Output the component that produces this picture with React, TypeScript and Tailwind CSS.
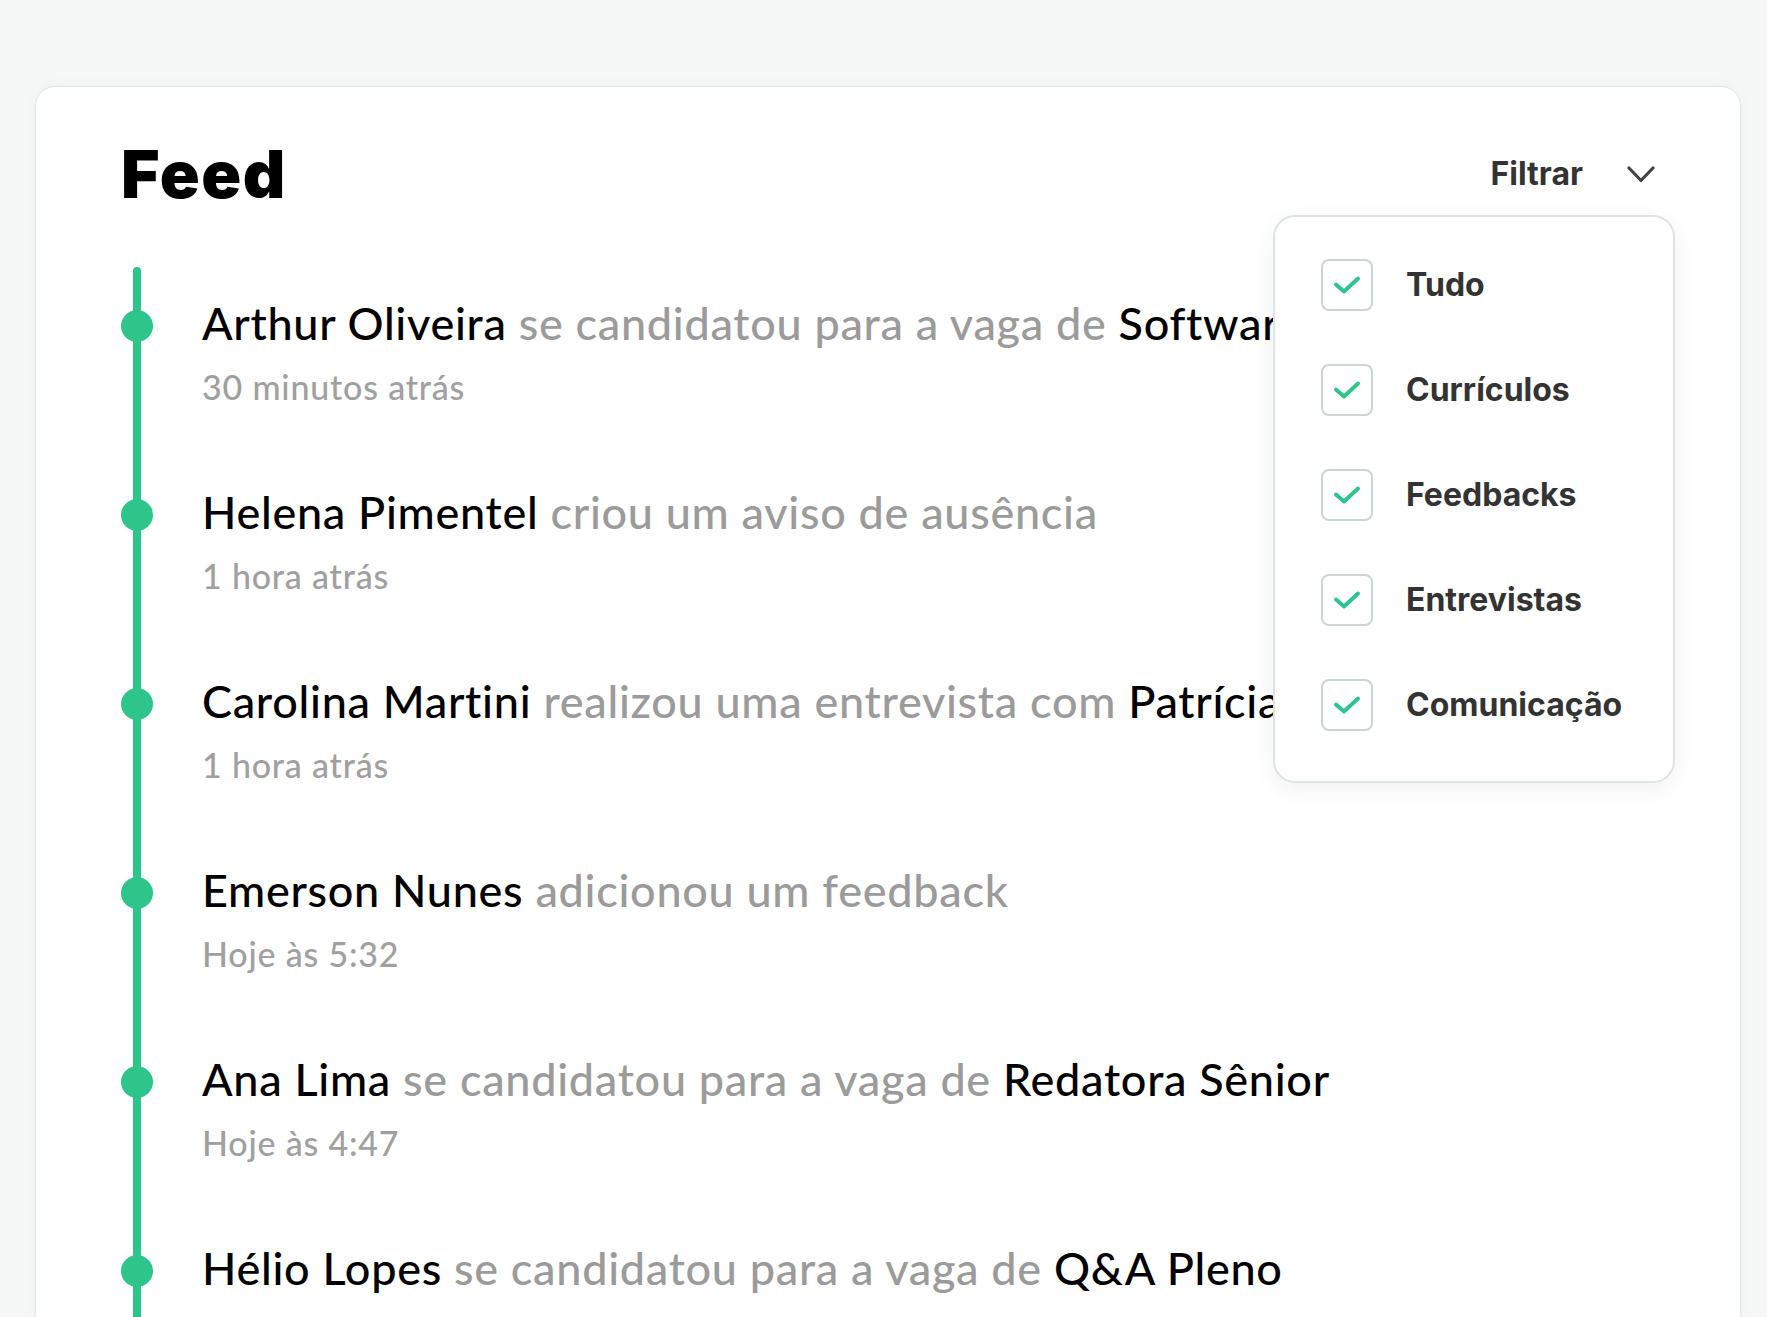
import React from "react";

type Item = { name: string; action: string; target?: string; time?: string };

const items: Item[] = [
  { name: "Arthur Oliveira", action: "se candidatou para a vaga de", target: "Software Engineer", time: "30 minutos atrás" },
  { name: "Helena Pimentel", action: "criou um aviso de ausência", time: "1 hora atrás" },
  { name: "Carolina Martini", action: "realizou uma entrevista com", target: "Patrícia Souza", time: "1 hora atrás" },
  { name: "Emerson Nunes", action: "adicionou um feedback", time: "Hoje às 5:32" },
  { name: "Ana Lima", action: "se candidatou para a vaga de", target: "Redatora Sênior", time: "Hoje às 4:47" },
  { name: "Hélio Lopes", action: "se candidatou para a vaga de", target: "Q&A Pleno" },
];

const filters = ["Tudo", "Currículos", "Feedbacks", "Entrevistas", "Comunicação"];

function Check() {
  return (
    <svg width="28" height="20" viewBox="0 0 28 20" fill="none">
      <polyline points="3,9.5 11,16.5 25,3.5" stroke="#2ec58b" strokeWidth="4" strokeLinecap="round" strokeLinejoin="round" />
    </svg>
  );
}

export default function App() {
  return (
    <div className="h-[1317px] overflow-hidden bg-[#f6f7f7] pt-[86px] pl-[35px] pr-[26px]">
      <div className="relative h-[1300px] rounded-t-[20px] border border-[#dfe5e4] bg-white shadow-[0_0_14px_rgba(0,0,0,0.04)]">
        <div className="flex items-center justify-between pl-[85px] pr-[85px] pt-[54px]">
          <h1 className="text-[66px] leading-[66px] font-black text-black tracking-[1.5px] font-['Inter',sans-serif]">Feed</h1>
          <button className="flex items-center gap-[44px] text-[32px] leading-[32px] font-bold text-[#333333] font-['Inter',sans-serif]">
            <span>Filtrar</span>
            <svg width="28" height="17" viewBox="0 0 28 17" fill="none">
              <polyline points="2,2 14,14.5 26,2" stroke="#444444" strokeWidth="3.2" strokeLinecap="round" strokeLinejoin="round" />
            </svg>
          </button>
        </div>

        <div className="relative mt-[60px] pl-[85px] pt-[29px]">
          <div className="absolute left-[97px] top-0 bottom-0 w-[8px] rounded-full bg-[#2ec58b]" />
          {items.map((it) => (
            <div key={it.name} className="relative flex h-[189px] items-start">
              <div className="mt-[14px] h-[32px] w-[32px] shrink-0 rounded-full bg-[#2ec58b]" />
              <div className="ml-[49px] font-['Lato',sans-serif]">
                <p className="whitespace-nowrap text-[45px] leading-[54px] font-medium tracking-[0.7px]">
                  <span className="text-black">{it.name}</span>{" "}
                  <span className="text-[#9b9b9b]">{it.action}</span>
                  {it.target && (
                    <>
                      {" "}
                      <span className="text-black">{it.target}</span>
                    </>
                  )}
                </p>
                {it.time && (
                  <p className="mt-[17px] whitespace-nowrap text-[34px] leading-[40px] font-medium tracking-[0.8px] text-[#a0a0a0]">{it.time}</p>
                )}
              </div>
            </div>
          ))}
        </div>

        <div className="absolute right-[65px] top-[128px] h-[568px] w-[402px] rounded-[22px] border-2 border-[#dde4e3] bg-white pl-[46px] pt-[42px] shadow-[0_6px_24px_rgba(0,0,0,0.06)]">
          <div className="flex flex-col gap-[53px]">
            {filters.map((f) => (
              <label key={f} className="flex items-center gap-[33px]">
                <span className="flex h-[52px] w-[52px] items-center justify-center rounded-[8px] border-2 border-[#cdd5d4] bg-white">
                  <Check />
                </span>
                <span className="text-[32px] leading-[32px] font-bold text-[#333333] font-['Inter',sans-serif]">{f}</span>
              </label>
            ))}
          </div>
        </div>
      </div>
    </div>
  );
}
